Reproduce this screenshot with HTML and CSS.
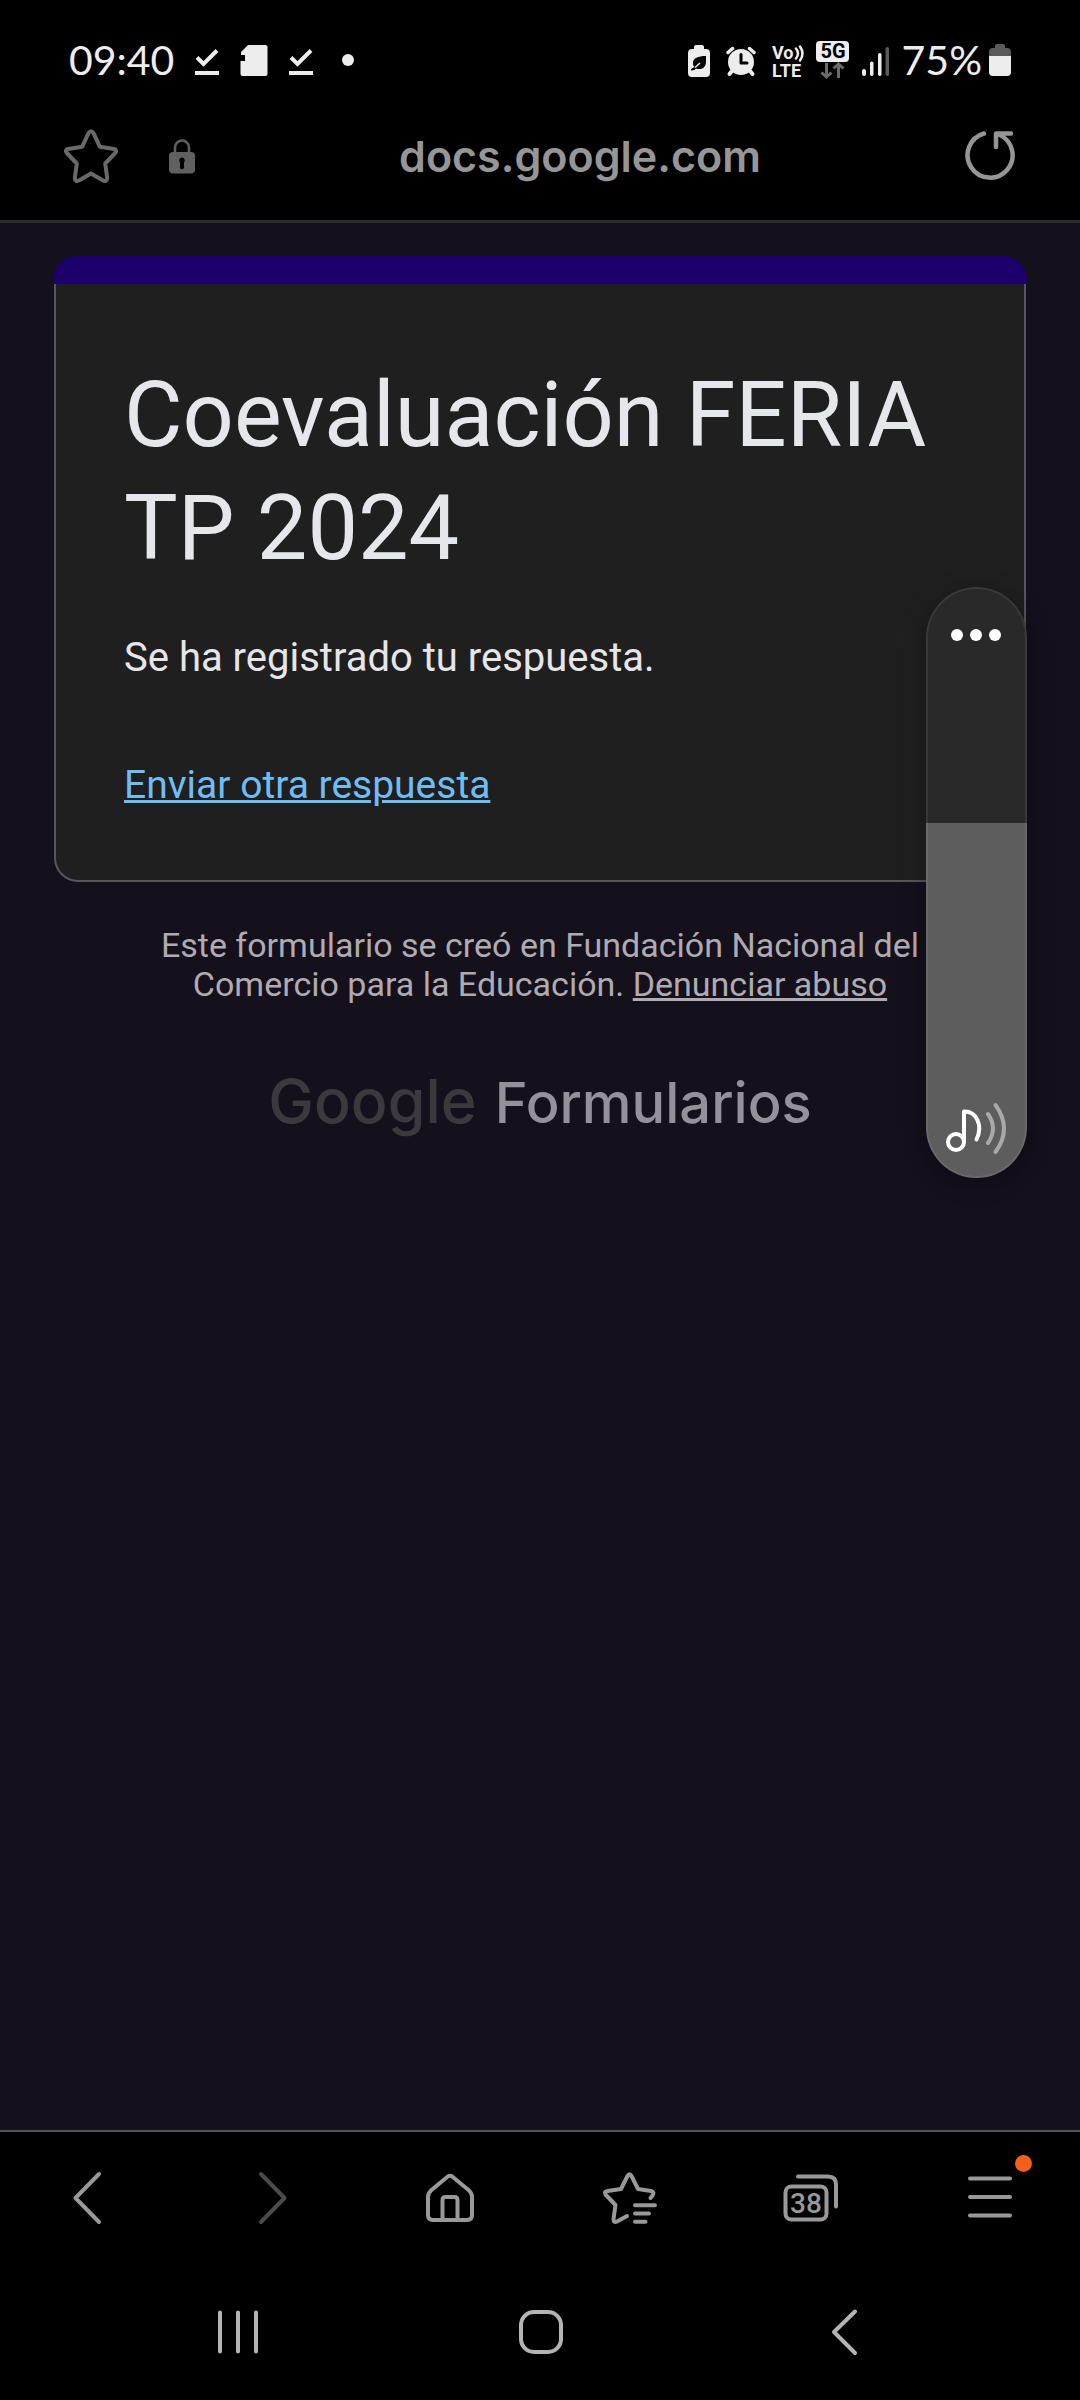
FILE: index.html
```html
<!DOCTYPE html>
<html lang="es">
<head>
<meta charset="utf-8">
<meta name="viewport" content="width=device-width, initial-scale=1">
<title>Coevaluación FERIA TP 2024</title>
<link rel="stylesheet" href="styles.css">
</head>
<body>
<header class="top">
  <div class="status">
    <div class="status-left">
      <time class="status-text">09:40</time>
      <svg class="done" width="24" height="32" viewBox="0 0 24 32" aria-hidden="true"><path d="M2 13.500 8.500 20 22 6.500" fill="none" stroke="currentColor" stroke-width="4"/><path d="M0 27h24v4H0z" fill="currentColor"/></svg>
      <svg class="card-icon" width="28" height="32" viewBox="0 0 28 32" aria-hidden="true"><path fill="currentColor" d="M8 1h17.500a2 2 0 0 1 2 2v27a2 2 0 0 1-2 2h-23a2 2 0 0 1-2-2V17H5v-6H1V8z"/></svg>
      <svg class="done" width="24" height="32" viewBox="0 0 24 32" aria-hidden="true"><path d="M2 13.500 8.500 20 22 6.500" fill="none" stroke="currentColor" stroke-width="4"/><path d="M0 27h24v4H0z" fill="currentColor"/></svg>
      <span class="status-dot"></span>
    </div>
    <div class="status-right">
      <svg width="22" height="38" viewBox="0 0 22 38" aria-hidden="true"><path fill="currentColor" d="M8 4h6a2 2 0 0 1 2 2v2h2a4 4 0 0 1 4 4v20a4 4 0 0 1-4 4H4a4 4 0 0 1-4-4V12a4 4 0 0 1 4-4h2V6a2 2 0 0 1 2-2z"/><path fill="#000" d="M18 15c-8 0-13 2-13 7 0 2 .5 3 1.500 4L3 28v1.500c3 0 4-1 5-2 6 2 10-1 10-7z"/><path d="M7 26.500l5-4.500" stroke="#ededed" stroke-width="1.500"/></svg>
      <svg class="alarm" width="30" height="38" viewBox="0 0 30 38" aria-hidden="true"><circle cx="15" cy="21" r="13" fill="currentColor"/><path d="M2 11.500 6.500 7.500M28 11.500 23.500 7.500" stroke="currentColor" stroke-width="3.500" stroke-linecap="round"/><path d="M5.500 30.500 3.500 33M24.500 30.500l2 2.500" stroke="currentColor" stroke-width="4" stroke-linecap="round"/><path d="M15 13.500V22h6" fill="none" stroke="#000" stroke-width="3" stroke-linecap="round" stroke-linejoin="round"/></svg>
      <svg class="volte" width="32" height="46" viewBox="0 -4 32 46"><text x="0" y="18" class="volte-text">Vo</text><text x="0" y="36" class="volte-text">LTE</text><path d="M24 7.500q4 5 0 10M28 5.500q5 7 0 14" fill="none" stroke="currentColor" stroke-width="2.500" stroke-linecap="round"/></svg>
      <svg class="fiveg" width="34" height="46" viewBox="0 -4 34 46"><rect width="33" height="21" rx="4" fill="currentColor"/><text x="17" y="17" class="fiveg-text">5G</text><path d="M10.500 22v14M5.500 31.500l5 4.500 5-4.500M22.500 37V23M17.500 27.500l5-4.500 5 4.500" fill="none" stroke="#6b6b6b" stroke-width="3"/></svg>
      <svg class="signal" width="28" height="38" viewBox="0 0 28 38" aria-hidden="true"><g fill="currentColor"><rect x="0" y="28" width="4" height="7" rx="2"/><rect x="8" y="20.500" width="3.500" height="14.500" rx="1.700"/><rect x="16" y="12" width="3.500" height="23" rx="1.700"/></g><rect x="23.500" y="6" width="3.500" height="29" rx="1.700" fill="#5a5a5a"/></svg>
      <span class="status-text">75%</span>
      <svg class="battery" width="22" height="38" viewBox="0 0 22 38" aria-hidden="true"><path fill="#5a5a5a" d="M8 3h6a2 2 0 0 1 2 2v2h2a4 4 0 0 1 4 4v4H0v-4a4 4 0 0 1 4-4h2V5a2 2 0 0 1 2-2z"/><path fill="currentColor" d="M0 15h22v16a4 4 0 0 1-4 4H4a4 4 0 0 1-4-4z"/></svg>
    </div>
  </div>
  <div class="toolbar">
    <button class="icon-btn star" type="button" aria-label="Favorito"><svg width="54" height="54" viewBox="0 0 54 54"><path d="M24.500 4.200Q27 .5 29.500 4.200L35.800 17.700 50 20Q53.500 21 51.200 24L41.200 34.500 43.200 49Q42.800 53.200 39 51.500L27 44.500 15 51.500Q11.200 53.200 10.800 49L12.800 34.500 2.800 24Q.5 21 4 20L18.200 17.700Z" fill="none" stroke="currentColor" stroke-width="4" stroke-linejoin="round"/></svg></button>
    <svg class="lock" width="26" height="36" viewBox="0 0 26 36" aria-hidden="true"><path d="M6 15V9.500a7 7 0 0 1 14 0V15" fill="none" stroke="currentColor" stroke-width="2.600"/><rect x="0" y="14" width="26" height="21.500" rx="4" fill="currentColor"/><path fill="#000" d="M13 19.500a3 3 0 0 1 2 5V28a2 2 0 0 1-4 2v-5.500a3 3 0 0 1 2-5z"/></svg>
    <span class="url">docs.google.com</span>
    <button class="icon-btn reload" type="button" aria-label="Recargar"><svg width="50" height="54" viewBox="0 0 50 54"><path d="M19 4.500A22.500 22.500 0 1 0 34 5.500" fill="none" stroke="currentColor" stroke-width="4.500" stroke-linecap="round"/><path d="M46 4.500H31V18" fill="none" stroke="currentColor" stroke-width="4.500" stroke-linecap="round" stroke-linejoin="round"/></svg></button>
  </div>
</header>

<main class="page">
  <section class="card">
    <h1>Coevaluación FERIA TP 2024</h1>
    <p class="message">Se ha registrado tu respuesta.</p>
    <a class="again" href="#">Enviar otra respuesta</a>
  </section>
  <footer class="foot">
    <p>Este formulario se creó en Fundación Nacional del Comercio para la Educación. <a href="#">Denunciar abuso</a></p>
    <a class="brand" href="#"><span class="brand-google">Google</span><span>Formularios</span></a>
  </footer>
</main>

<aside class="volume">
  <input class="level" type="range" min="0" max="100" value="60" aria-label="Volumen multimedia">
  <button class="icon-btn more" type="button" aria-label="Más"><svg width="54" height="16" viewBox="0 0 54 16" fill="#fff"><circle cx="8" cy="8" r="6"/><circle cx="27" cy="8" r="6"/><circle cx="46" cy="8" r="6"/></svg></button>
  <svg class="note" width="62" height="54" viewBox="0 0 62 54" fill="none" stroke-width="4" stroke-linecap="round" stroke-linejoin="round" aria-hidden="true"><g stroke="#fff"><circle cx="11" cy="41" r="8"/><path d="M19 41V10.500C31 10 38.500 24 31.500 38.500"/></g><path stroke="#a9a9a9" d="M43 13q10 14.500 0 29M50.500 4q17 23.500 0 47"/></svg>
</aside>

<nav class="browser-nav" aria-label="Navegador">
  <button class="icon-btn" type="button" aria-label="Atrás"><svg width="72" height="72" viewBox="0 0 72 72"><path d="M45 12 21.500 36 45 60"/></svg></button>
  <button class="icon-btn dim" type="button" aria-label="Adelante"><svg width="72" height="72" viewBox="0 0 72 72"><path d="M27 12 50.500 36 27 60"/></svg></button>
  <button class="icon-btn" type="button" aria-label="Inicio"><svg width="72" height="72" viewBox="0 0 72 72"><path d="M33.500 14.800Q36 12.800 38.500 14.800L54.500 28Q58 31 58 35V53Q58 58 53 58H19Q14 58 14 53V35Q14 31 17.500 28ZM28.500 58V38Q28.500 35 31.500 35h9Q43.500 35 43.500 38V58"/></svg></button>
  <button class="icon-btn" type="button" aria-label="Marcadores"><svg width="72" height="72" viewBox="0 0 72 72"><path d="M33 54 23 59.500Q19.500 61 19.500 57L21.500 43 11.500 32.500Q9.500 29.500 13.500 29L27 27 33.500 14Q35.500 10.500 37.500 14L44 27 57 29Q61 30 58.500 33.500L56.500 36M41 43.200H61M41 51.500H55M41 59.700H51.500"/></svg></button>
  <button class="icon-btn" type="button" aria-label="Pestañas"><svg width="72" height="72" viewBox="0 0 72 72"><rect x="11.500" y="24.500" width="41" height="33" rx="6"/><path d="M24 14.500H54Q62 14.500 62 22.500V44.500"/><text class="tab-count" x="32" y="51">38</text></svg></button>
  <button class="icon-btn" type="button" aria-label="Menú"><span class="menu-icon"><svg width="72" height="72" viewBox="0 0 72 72"><path d="M16 16.500H56M16 35H56M16 53.500H56"/></svg><span class="badge"></span></span></button>
</nav>

<nav class="system-nav" aria-label="Sistema">
  <button class="icon-btn" type="button" aria-label="Recientes"><svg width="48" height="48" viewBox="0 0 48 48"><path d="M7 4.500v39M25 4.500v39M43 4.500v39"/></svg></button>
  <button class="icon-btn" type="button" aria-label="Pantalla de inicio"><svg width="48" height="48" viewBox="0 0 48 48"><rect x="5" y="4" width="40" height="40" rx="13"/></svg></button>
  <button class="icon-btn" type="button" aria-label="Volver"><svg width="48" height="48" viewBox="0 0 48 48"><path d="M36 3.500 15 24 36 45"/></svg></button>
</nav>
</body>
</html>
```

FILE: styles.css
```css
* { box-sizing: border-box; }

body {
  position: relative;
  display: flex;
  flex-direction: column;
  min-height: 100vh;
  margin: 0;
  background: #14101c;
  color: #e6e6e8;
  font-family: Roboto, "Liberation Sans", sans-serif;
}

svg { display: block; flex: none; }
h1, p { margin: 0; }

.icon-btn {
  display: flex;
  align-items: center;
  justify-content: center;
  padding: 0;
  border: 0;
  background: none;
  color: inherit;
  font: inherit;
}

.top {
  background: #000;
  border-bottom: 3px solid #2d2d2d;
}

.status {
  display: flex;
  align-items: center;
  justify-content: space-between;
  height: 92px;
  padding: 28px 69px 0;
  color: #ededed;
}

.status-left, .status-right { display: flex; align-items: center; }
.status-left { gap: 21px; }
.status-text { font: 41px/48px Lato, "Liberation Sans", sans-serif; }
.status-dot {
  width: 12px;
  height: 12px;
  margin-left: 8px;
  border-radius: 50%;
  background: currentColor;
}

.alarm { margin-left: 16px; }
.volte { margin-left: 16px; }
.fiveg { margin-left: 12px; }
.signal { margin: 0 12px; }
.battery { margin-left: 7px; }
.volte-text { font: 700 18px Roboto, sans-serif; fill: currentColor; }
.fiveg-text { font: 700 20px Roboto, sans-serif; fill: #000; text-anchor: middle; }

.toolbar {
  display: flex;
  align-items: center;
  height: 128px;
  padding: 0 65px 0 64px;
}
.star { color: #696969; }
.lock { margin-left: 51px; color: #606060; }
.url {
  flex: 1;
  color: #969696;
  font: 600 43px/56px Inter, "Liberation Sans", sans-serif;
  text-align: center;
}
.reload { color: #969696; }

.page { flex: 1; padding: 34px 54px; }

.card {
  position: relative;
  padding: 100px 68px 71px;
  border: 2px solid #57565b;
  border-radius: 24px;
  background: #1f1f1f;
}
.card::before {
  content: "";
  position: absolute;
  top: -3px;
  left: -3px;
  right: -3px;
  height: 28px;
  border-radius: 24px 24px 0 0;
  background: #1c006b;
}
h1 { color: #e6e7eb; font-size: 90px; font-weight: 400; line-height: 113px; }
.message { margin-top: 49px; font-size: 40px; line-height: 48px; }
.again {
  display: block;
  width: fit-content;
  margin-top: 79px;
  color: #70bdf6;
  font-size: 39px;
  line-height: 48px;
}

.foot {
  padding: 44px 70px 0;
  color: #afabb0;
  font-size: 34px;
  line-height: 39px;
  text-align: center;
}
.foot a { color: inherit; }
.foot .brand {
  display: flex;
  align-items: baseline;
  justify-content: center;
  gap: 18px;
  margin-top: 57px;
  color: #95919a;
  font: 500 56px/80px Inter, "Liberation Sans", sans-serif;
  text-decoration: none;
}
.brand-google { color: #3c393e; font-size: 61px; }

.volume {
  position: absolute;
  top: 587px;
  right: 53px;
  width: 101px;
  height: 591px;
  border-radius: 51px;
  overflow: hidden;
  box-shadow: 0 4px 24px rgba(0, 0, 0, .3);
}
.volume::after {
  content: "";
  position: absolute;
  inset: 0;
  border: 2px solid rgba(255, 255, 255, .08);
  border-radius: 51px;
  pointer-events: none;
}
.level {
  appearance: none;
  display: block;
  width: 100%;
  height: 100%;
  margin: 0;
  background: linear-gradient(to top, #5d5d5e 60%, #292929 60%);
  writing-mode: vertical-lr;
  direction: rtl;
}
.level::-webkit-slider-thumb { appearance: none; width: 1px; height: 1px; }
.more { position: absolute; top: 40px; left: 23px; }
.note { position: absolute; bottom: 23px; left: 19px; }

.browser-nav, .system-nav {
  display: grid;
  background: #000;
}
.browser-nav svg, .system-nav svg {
  fill: none;
  stroke: currentColor;
  stroke-width: 4;
  stroke-linecap: round;
  stroke-linejoin: round;
}
.browser-nav {
  grid-template-columns: repeat(6, 1fr);
  height: 134px;
  border-top: 2px solid #56535c;
  color: #999;
}
.dim { color: #4b4b4b; }
.browser-nav .tab-count {
  font: 500 28px Roboto, sans-serif;
  fill: currentColor;
  stroke: none;
  text-anchor: middle;
}
.menu-icon { position: relative; }
.badge {
  position: absolute;
  top: -7px;
  left: 61px;
  width: 17px;
  height: 17px;
  border-radius: 50%;
  background: #f26019;
}
.system-nav {
  grid-template-columns: repeat(3, 1fr);
  height: 136px;
  padding: 0 86px;
  color: #b4b4b4;
}
```
